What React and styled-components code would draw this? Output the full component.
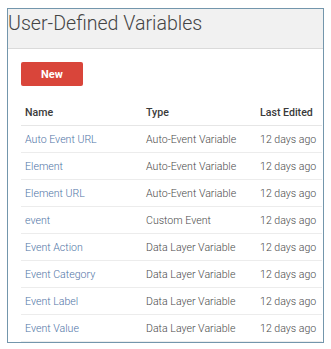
import React from "react";
import styled, { createGlobalStyle } from "styled-components";

const Global = createGlobalStyle`
  html, body { margin: 0; padding: 0; background: #ffffff; }
  body { font-family: Roboto, "Liberation Sans", Arial, sans-serif; }
`;

const Frame = styled.div`
  margin: 8px 0 0 7px;
  width: 317px;
  height: 335px;
  box-sizing: border-box;
  border: 1px solid #7396ac;
  background: #ffffff;
  display: flex;
  flex-direction: column;
`;

const Header = styled.div`
  height: 40px;
  box-sizing: border-box;
  background: #f1f1f1;
  border-bottom: 1px solid #dadada;
  padding: 5px 0 0 0;
`;

const Title = styled.h1`
  margin: 0;
  font-family: Roboto, "Liberation Sans", sans-serif;
  font-weight: 300;
  font-size: 19.6px;
  line-height: 20px;
  color: #444444;
  white-space: nowrap;
`;

const Body = styled.div`
  padding: 13px 0 0 13px;
  display: flex;
  flex-direction: column;
  align-items: flex-start;
`;

const NewButton = styled.button`
  width: 62px;
  height: 24px;
  border: none;
  border-radius: 2px;
  background: #d9453a;
  color: #ffffff;
  font-family: Roboto, "Liberation Sans", sans-serif;
  font-weight: 700;
  font-size: 11px;
  padding: 0;
  cursor: pointer;
`;

const Table = styled.div`
  margin-top: 13px;
  width: 301px;
  display: grid;
  grid-template-columns: 121px 114px 66px;
`;

const Cell = styled.div`
  height: 27px;
  box-sizing: border-box;
  border-bottom: 1px solid ${(p) => (p.$head ? "#e6e6e6" : "#ececec")};
  padding: ${(p) => (p.$head ? "0 0 0 4px" : "1px 0 0 4px")};
  display: flex;
  align-items: center;
  font-family: Roboto, "Liberation Sans", sans-serif;
  font-size: 10.6px;
  font-weight: ${(p) => (p.$head ? 500 : 300)};
  color: ${(p) => (p.$head ? "#3a3a3a" : p.$link ? "#4f74a6" : "#4a4a4a")};
  white-space: nowrap;
`;

const rows = [
  ["Auto Event URL", "Auto-Event Variable"],
  ["Element", "Auto-Event Variable"],
  ["Element URL", "Auto-Event Variable"],
  ["event", "Custom Event"],
  ["Event Action", "Data Layer Variable"],
  ["Event Category", "Data Layer Variable"],
  ["Event Label", "Data Layer Variable"],
  ["Event Value", "Data Layer Variable"],
];

export default function App() {
  return (
    <>
      <Global />
      <Frame>
        <Header>
          <Title>User-Defined Variables</Title>
        </Header>
        <Body>
          <NewButton>New</NewButton>
          <Table>
            <Cell $head>Name</Cell>
            <Cell $head>Type</Cell>
            <Cell $head>Last Edited</Cell>
            {rows.map(([name, type]) => (
              <React.Fragment key={name}>
                <Cell $link>{name}</Cell>
                <Cell>{type}</Cell>
                <Cell>12 days ago</Cell>
              </React.Fragment>
            ))}
          </Table>
        </Body>
      </Frame>
    </>
  );
}
